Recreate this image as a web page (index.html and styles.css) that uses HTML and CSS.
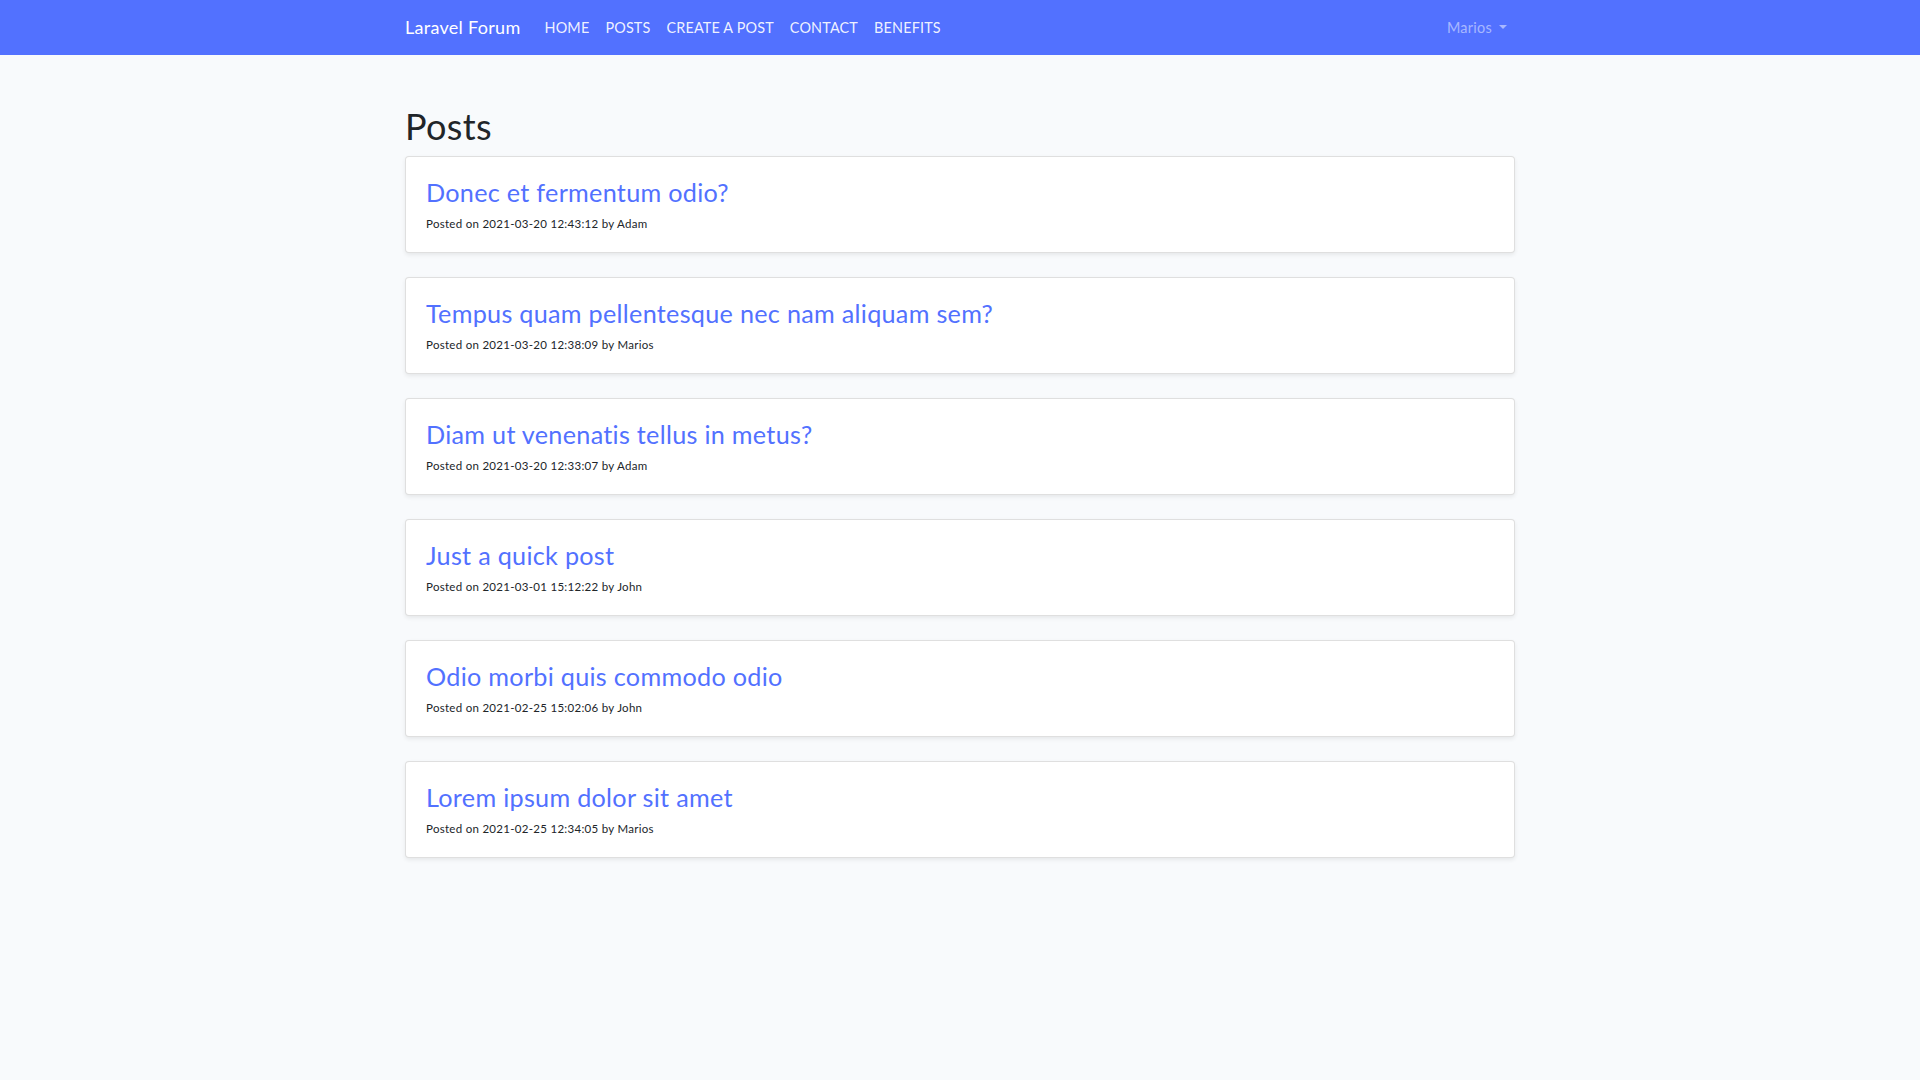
FILE: index.html
```html
<!DOCTYPE html>
<html lang="en">
<head>
<meta charset="utf-8">
<title>Laravel Forum</title>
<link rel="stylesheet" href="styles.css">
</head>
<body>
<nav class="navbar">
  <div class="container nav-inner">
    <a class="brand" href="#">Laravel Forum</a>
    <ul class="nav-links">
      <li><a href="#">HOME</a></li>
      <li><a href="#">POSTS</a></li>
      <li><a href="#">CREATE A POST</a></li>
      <li><a href="#">CONTACT</a></li>
      <li><a href="#">BENEFITS</a></li>
    </ul>
    <div class="user">Marios <span class="caret"></span></div>
  </div>
</nav>
<main class="container main">
  <h1 class="page-title">Posts</h1>
  <div class="card"><div class="card-body"><h3 class="post-title"><a href="#">Donec et fermentum odio?</a></h3><div class="meta">Posted on 2021-03-20 12:43:12 by Adam</div></div></div>
  <div class="card"><div class="card-body"><h3 class="post-title"><a href="#">Tempus quam pellentesque nec nam aliquam sem?</a></h3><div class="meta">Posted on 2021-03-20 12:38:09 by Marios</div></div></div>
  <div class="card"><div class="card-body"><h3 class="post-title"><a href="#">Diam ut venenatis tellus in metus?</a></h3><div class="meta">Posted on 2021-03-20 12:33:07 by Adam</div></div></div>
  <div class="card"><div class="card-body"><h3 class="post-title"><a href="#">Just a quick post</a></h3><div class="meta">Posted on 2021-03-01 15:12:22 by John</div></div></div>
  <div class="card"><div class="card-body"><h3 class="post-title"><a href="#">Odio morbi quis commodo odio</a></h3><div class="meta">Posted on 2021-02-25 15:02:06 by John</div></div></div>
  <div class="card"><div class="card-body"><h3 class="post-title"><a href="#">Lorem ipsum dolor sit amet</a></h3><div class="meta">Posted on 2021-02-25 12:34:05 by Marios</div></div></div>
</main>
</body>
</html>
```
FILE: styles.css
```css
* { box-sizing: border-box; }
html, body { margin: 0; padding: 0; }
body {
  font-family: Lato, "Noto Sans", sans-serif;
  font-size: 14.4px;
  line-height: 1.6;
  color: #212529;
  background: #f8fafc;
  letter-spacing: 0.02em;
}
a { text-decoration: none; }
.container {
  width: 1110px;
  margin: 0 auto;
}
.navbar {
  background: #5271ff;
  height: 55px;
}
.nav-inner {
  display: flex;
  align-items: center;
  height: 55px;
}
.brand {
  color: #fff;
  font-size: 18px;
  margin-right: 16px;
  white-space: nowrap;
  letter-spacing: 0.016em;
}
.nav-links {
  list-style: none;
  display: flex;
  margin: 0;
  padding: 0;
  flex: 1;
}
.nav-links a {
  display: block;
  padding: 8px;
  color: rgba(255,255,255,0.92);
  font-size: 14.4px;
  letter-spacing: 0.012em;
}
.user {
  color: rgba(255,255,255,0.5);
  padding: 8px;
  display: flex;
  align-items: center;
}
.caret {
  display: inline-block;
  margin-left: 7px;
  border-top: 4.8px solid rgba(255,255,255,0.5);
  border-left: 4.8px solid transparent;
  border-right: 4.8px solid transparent;
  width: 0;
  height: 0;
}
.main {
  padding-top: 50px;
}
.page-title {
  font-size: 36px;
  font-weight: 400;
  line-height: 1.2;
  margin: 0 0 8px;
  letter-spacing: 0.01em;
}
.card {
  background: #fff;
  border: 1px solid rgba(0,0,0,0.125);
  border-radius: 4px;
  box-shadow: 0 2px 4px rgba(0,0,0,0.075);
  margin-bottom: 24px;
}
.card-body {
  padding: 20px;
}
.post-title {
  font-size: 25.2px;
  font-weight: 400;
  line-height: 30px;
  margin: 0 0 8px;
}
.post-title a { color: #5271ff; }
.meta {
  font-size: 11.5px;
  line-height: 17px;
}
```
